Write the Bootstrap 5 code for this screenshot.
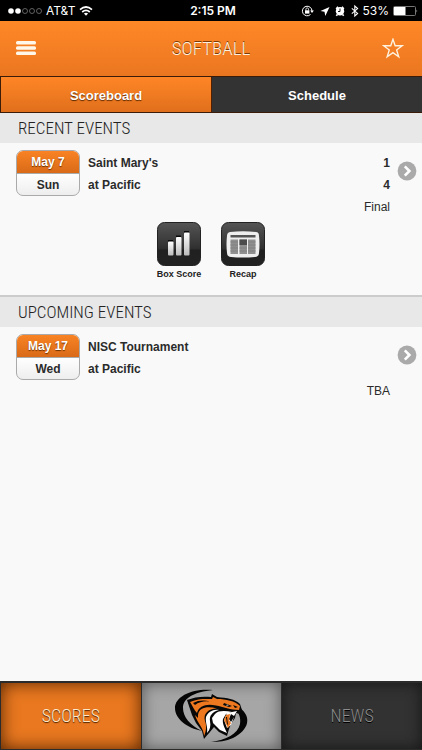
<!DOCTYPE html>
<html lang="en">
<head>
<meta charset="utf-8">
<meta name="viewport" content="width=device-width, initial-scale=1">
<title>Softball</title>
<link href="https://cdn.jsdelivr.net/npm/bootstrap@5.3.0/dist/css/bootstrap.min.css" rel="stylesheet">
<style>
body{font-family:"Liberation Sans",Arial,sans-serif;font-size:12px;line-height:22px;color:#2b2b2b;background:#f9f9f9}
.status{height:21px;background:#000;color:#fff;font-family:Inter,sans-serif;font-size:12px;line-height:21px}
.narrow{font-family:"Roboto Condensed","Liberation Sans Narrow",Roboto,sans-serif;font-weight:300}
.topbar{height:55px;background:linear-gradient(#ff8827,#ea7620)}
.topbar h1{font-size:19px;line-height:24px;color:#fff1df;text-shadow:0 -1px 0 #7a3b08}
.side{flex:1 1 0}
.tabs{height:37px;background:#3a1c08;padding:1px 0 1px 1px}
.tabs button{flex:1 1 0;border:0;color:#fff;font-weight:700;font-size:13px;line-height:35px;background:#333}
.tabs .current{background:linear-gradient(#ff8626,#e06f1c);text-shadow:0 1px 1px #5a2800;border-right:1px solid #521f00}
.section-title{height:30px;background:#e8e8e8;font-size:17px;line-height:30px;color:#222;padding-left:18px}
.upcoming{border-top:2px solid #ccc;height:32px}
.event{padding:7px 5px 0 16px}
.date{width:64px;height:46px;border:1px solid #aaa;border-radius:7px;overflow:hidden;font-weight:700;line-height:22px;text-align:center;background:linear-gradient(#fff 50%,#eee)}
.date .month{background:linear-gradient(#f98324,#d96a18);color:#fff;text-shadow:0 1px 1px #6a3000;border-bottom:1px solid #aaa;height:23px}
.lines{padding:2px 7px 0 8px}
.lines div{height:22px}
.go{margin-top:11px}
.tile{width:64px;font-size:9px;line-height:12px;font-weight:700;color:#222}
.tile svg{margin-bottom:2px}
.tiles{padding:4px 0 15px}
.bottom{height:69px;background:#2b2b2b;padding:2px 0 1px 1px;gap:1px}
.bottom a{flex:1 1 0;font-size:18px;text-decoration:none}
.bottom .scores{background:#e97820;color:#ffe9cd;text-shadow:0 1px 1px #4a2100;box-shadow:inset 0 0 17px #512300}
.bottom .home{background:#a6a6a6;box-shadow:inset 0 0 15px #555}
.bottom .news{background:#323232;color:#8c8c8c;text-shadow:0 1px 0 #000;box-shadow:inset 0 0 15px #151515}
svg{display:block;flex-shrink:0}
</style>
<script src="https://cdn.jsdelivr.net/npm/bootstrap@5.3.0/dist/js/bootstrap.bundle.min.js"></script>
</head>
<body class="d-flex flex-column min-vh-100">
<div class="status d-flex align-items-center ps-2 pe-1">
  <div class="side d-flex align-items-center">
    <svg width="34" height="8" viewBox="-1 0 34 8" fill="none" stroke="#777" stroke-width=".8"><circle cx="2" cy="4" r="2.8" fill="#fff" stroke="none"/><circle cx="9" cy="4" r="2.8" fill="#fff" stroke="none"/><circle cx="16" cy="4" r="2.5"/><circle cx="23" cy="4" r="2.5"/><circle cx="30" cy="4" r="2.5"/></svg>
    <span class="ms-1 me-1">AT&amp;T</span>
    <svg width="14" height="10" viewBox="0 0 14 10" fill="none" stroke="#fff" stroke-width="1.7"><path d="M1 3.6Q7-1.6 13 3.6M3.2 6Q7 2.7 10.8 6"/><path d="M7 9.7 4.9 7.5Q7 5.8 9.1 7.5Z" fill="#fff" stroke="none"/></svg>
  </div>
  <span class="fw-semibold">2:15 PM</span>
  <div class="side d-flex align-items-center justify-content-end">
    <svg width="62" height="14" viewBox="0 0 62 14" fill="none" stroke="#fff">
      <path d="M9.5 10.5A4.8 4.8 0 1 1 11 7" stroke-width="1"/><path d="M9.2 6.5h3.7L11 9Z" fill="#fff" stroke="none"/><path d="M4 6.3h4.4v3.3H4Z" fill="#fff" stroke="none"/><path d="M4.9 6.5V5.2a1.3 1.3 0 0 1 2.6 0v1.3" stroke-width=".8"/>
      <path d="M28.5 3 19.5 7.1l4 .7.8 4.2Z" fill="#fff" stroke="none"/>
      <circle cx="39" cy="7.3" r="4.2" fill="#fff" stroke="none"/><path d="M35.2 5 37 2.8M42.8 5 41 2.8M36.4 10.5l-1.1 1.3M41.6 10.5l1.1 1.3" stroke-width="1.6"/><path d="M39 4.5v3h-2" stroke="#000" stroke-width=".9"/>
      <path d="m50.8 4.4 5.8 5-2.8 2.6V2l2.8 2.6-5.8 5" stroke-width="1.1"/>
    </svg>
    <span class="me-1">53%</span>
    <svg width="25" height="10" viewBox="0 0 25 10"><rect x=".5" y=".5" width="22" height="9" rx="1" fill="none" stroke="#777"/><path d="M1 1h11.5v8H1Z" fill="#fff"/><path d="M23.5 3.5q1.5 1.5 0 3Z" fill="#aaa"/></svg>
  </div>
</div>
<header class="topbar d-flex align-items-center">
  <div class="side ps-3"><button class="btn p-0 border-0 d-block" aria-label="Menu"><svg width="21" height="15" viewBox="0 0 21 15" fill="#fff7e9"><rect width="20" height="3.6" rx="1.5"/><rect y="5.2" width="20" height="3.6" rx="1.5"/><rect y="10.4" width="20" height="3.6" rx="1.5"/></svg></button></div>
  <h1 class="narrow m-0">SOFTBALL</h1>
  <div class="side pe-3 d-flex justify-content-end"><button class="btn p-0 border-0" aria-label="Favorite"><svg width="24" height="21" viewBox="0 0 21 20" fill="none" stroke="#fff2df" stroke-width="1.300"><path d="m9.5 1.2 2.1 6.2h6.700l-5.300 4 2 6.500-5.500-3.900-5.500 3.900 2-6.500-5.300-4h6.700Z"/></svg></button></div>
</header>
<nav class="tabs d-flex" aria-label="Views"><button class="current">Scoreboard</button><button>Schedule</button></nav>
<main class="flex-grow-1">
  <section>
    <h2 class="section-title narrow m-0">RECENT EVENTS</h2>
    <div class="event d-flex align-items-start">
      <div class="date flex-shrink-0"><div class="month">May 7</div><div>Sun</div></div>
      <div class="lines flex-grow-1 fw-bold"><div class="d-flex justify-content-between"><span>Saint Mary's</span><span>1</span></div><div class="d-flex justify-content-between"><span>at Pacific</span><span>4</span></div><div class="text-end fw-normal">Final</div></div>
      <a href="#recent" class="go" aria-label="Open game"><svg width="20" height="20" viewBox="0 0 20 20"><circle cx="10" cy="10" r="9.4" fill="#aaa"/><path d="m7.8 5.4 4.6 4.6-4.6 4.6" fill="none" stroke="#fff" stroke-width="2.6"/></svg></a>
    </div>
    <div class="tiles d-flex justify-content-center">
      <button class="tile btn p-0 border-0 d-flex flex-column align-items-center"><svg width="44" height="44" viewBox="0 0 44 44"><defs><linearGradient id="dark" x2="0" y2="1"><stop stop-color="#555"/><stop offset=".6" stop-color="#303030"/><stop offset=".65" stop-color="#202020"/><stop offset="1" stop-color="#222"/></linearGradient><linearGradient id="bar" x2="0" y2="1"><stop stop-color="#fff"/><stop offset="1" stop-color="#bbb"/></linearGradient></defs><rect x=".5" y=".5" width="43" height="43" rx="7" fill="url(#dark)" stroke="#222"/><path d="M11 18h5v2h-5ZM19 13.500h5v2h-5ZM27 9h5v2h-5Z" fill="#080808"/><g fill="url(#bar)"><rect x="11" y="19.500" width="5.500" height="14" rx="1"/><rect x="19" y="15" width="5.500" height="18.500" rx="1"/><rect x="27" y="10.500" width="5.500" height="23" rx="1"/></g></svg>Box Score</button>
      <button class="tile btn p-0 border-0 d-flex flex-column align-items-center"><svg width="44" height="44" viewBox="0 0 44 44"><rect x=".5" y=".5" width="43" height="43" rx="7" fill="url(#dark)" stroke="#222"/><path d="M9 10Q22 8.500 35 10 38 10 38 14 39 22 38 31 38 34.500 34 35 22 36 10 35 6 34.500 6 31 5 22 6 14 6 10.500 9 10Z" fill="#eee"/><path d="M9.500 13h25v2.500h-25Z" fill="#555"/><path d="M9.500 17.500H17V32H9.500ZM18.500 17.500H26V32h-7.500ZM27 17.500h7.500V32H27Z" fill="#909090"/><path d="M18.500 17.500H26V23h-7.500Z" fill="#4c4c4c"/><path d="M9.500 20H17m-7.500 3H17m-7.500 3H17m-7.500 3H17m1.500-3H26m-7.500 3H26m1-9h7.500M27 23h7.500M27 26h7.500M27 29h7.500" stroke="#808080"/></svg>Recap</button>
    </div>
  </section>
  <section>
    <h2 class="section-title upcoming narrow m-0">UPCOMING EVENTS</h2>
    <div class="event d-flex align-items-start">
      <div class="date flex-shrink-0"><div class="month">May 17</div><div>Wed</div></div>
      <div class="lines flex-grow-1 fw-bold"><div>NISC Tournament</div><div>at Pacific</div><div class="text-end fw-normal">TBA</div></div>
      <a href="#upcoming" class="go" aria-label="Open tournament"><svg width="20" height="20" viewBox="0 0 20 20"><circle cx="10" cy="10" r="9.4" fill="#aaa"/><path d="m7.800 5.400 4.600 4.600-4.600 4.600" fill="none" stroke="#fff" stroke-width="2.600"/></svg></a>
    </div>
  </section>
</main>
<nav class="bottom d-flex" aria-label="Main">
  <a href="#scores" class="scores narrow d-flex align-items-center justify-content-center">SCORES</a>
  <a href="#home" class="home d-flex align-items-center justify-content-center" aria-label="Home">
    <svg width="84" height="60" viewBox="0 1 84 60">
      <path d="M43 5C23 3 5 11 5 23c0 11 12 20 27 23C20 40 13 32 13 23 13 13 24 7 43 5Z" fill="#050505"/>
      <path d="M70 23c12 9 9 22-7 30-7 3-14 4-22 4 15-2 27-8 29-18 1-6-1-11-4-14Z" fill="#050505"/>
      <path d="M17 15C24 12 33 11 41 12L42 9 47 12C57 13 65 14 70 19L72 25 70 29 66 28 65 33 61 39 59 44 57 51 49 47 44 42C41 46 38 49 34 54L32 46 26 38 22 30Z" fill="#080808"/>
      <path d="M20 17C29 13 37 14 42 14L43 12 47 14C56 14 65 16 70 21L69 25C61 25 53 22 46 20.500 36 18.500 29 21 27 28 24 25 22 20 20 17Z" fill="#ee781f"/>
      <path d="M28 30C29 22 38 21 47 23.500 38 23.500 33 29 35 36 37 41 36 47 34 51 34 43 27 38 25 30L28 33Z" fill="#ee781f"/>
      <path d="M49 25C42 27 39 31 40 36 41 41 40 45 37 48 38 42 35 37 36 32 38 27 43 24 49 25Z" fill="#fff"/>
      <path d="M45 29C49 25 56 26 62 27L56 29 53 34C52 39 55 43 57 48L50 45 43 38 42 33Z" fill="#fff"/>
      <path d="M57 28 67 26 64 31 61 29 59 34 61 37 64 32 61 40 57 43 54 35Z" fill="#fff"/>
      <path d="M56 30 60 29 59 35 61 38 58 43 54 35Z" fill="#ee781f"/>
      <path d="m56 32 1 7 1 1-1-8Z" fill="#080808"/>
      <path d="M23 18Q31 14 40 16.500 31 15.500 25 20ZM54 18l8 3-3 1-6-2ZM63 20l5 2-3 1Z" fill="#080808"/>
      <path d="m57 19.500 2 1-3 0Z" fill="#fff"/>
    </svg>
  </a>
  <a href="#news" class="news narrow d-flex align-items-center justify-content-center">NEWS</a>
</nav>
</body>
</html>
